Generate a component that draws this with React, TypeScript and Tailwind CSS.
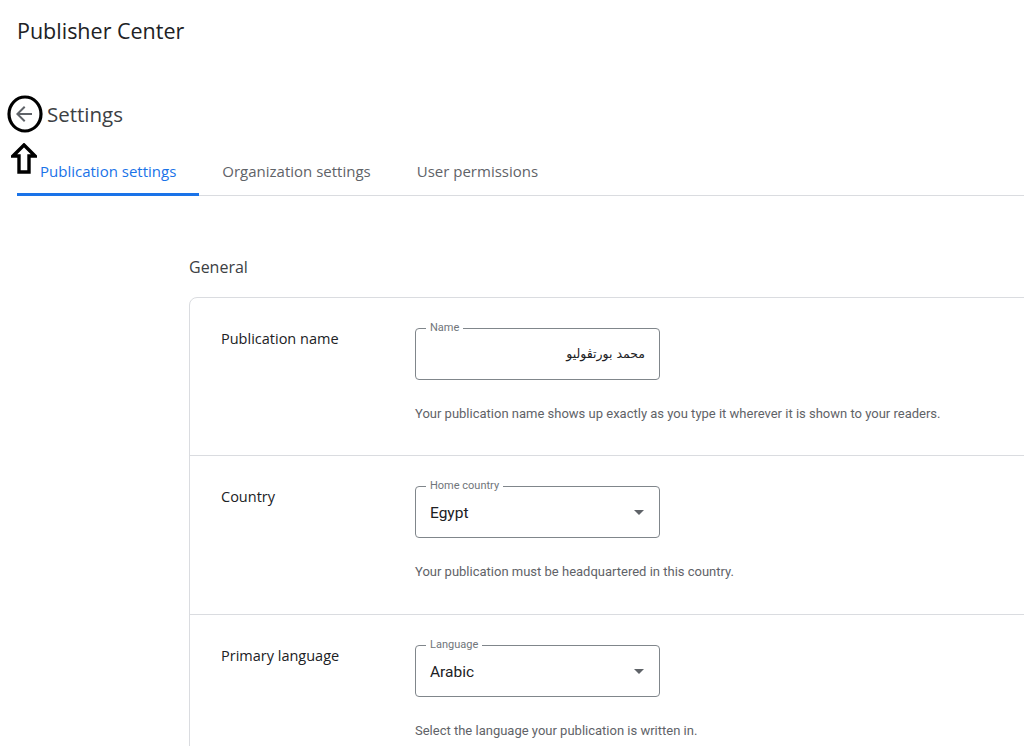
import React from "react";

function OutlinedField({ label, value, select, rtl }: { label: string; value: string; select?: boolean; rtl?: boolean }) {
  return (
    <div className="relative h-[52px] w-[245px] rounded-[4px] border border-[#80868b] flex items-center px-[14px]">
      <span className="absolute -top-[8px] left-[10px] bg-white px-[4px] text-[11px] leading-[14px] text-[#70757a]">{label}</span>
      {rtl ? (
        <span dir="rtl" className="w-full text-right text-[12.5px] text-[#202124] font-['DejaVu_Sans','Noto_Sans',sans-serif]">{value}</span>
      ) : (
        <span className="flex-1 pt-[3px] text-[15.5px] text-[#202124]">{value}</span>
      )}
      {select && (
        <svg width="10" height="5" viewBox="0 0 10 5" className="mr-[1px]">
          <path d="M0 0 L5 5 L10 0 Z" fill="#5f6368" />
        </svg>
      )}
    </div>
  );
}

function Row({ title, children, help, first, last }: { title: string; children: React.ReactNode; help: string; first?: boolean; last?: boolean }) {
  return (
    <div className={`flex pl-[31px] pt-[30px] ${first ? "h-[158px]" : "h-[159px]"} ${last ? "" : "border-b border-[#dadce0]"}`}>
      <div className="w-[194px] pt-[1px] text-[14.5px] font-[500] text-[#202124] leading-[20px] font-['Open_Sans',sans-serif]">{title}</div>
      <div className="flex flex-col">
        {children}
        <p className="mt-[26px] text-[13px] leading-[16px] text-[#5f6368]">{help}</p>
      </div>
    </div>
  );
}

export default function App() {
  const tabs = ["Publication settings", "Organization settings", "User permissions"];
  return (
    <div className="relative w-[1024px] h-[746px] overflow-hidden bg-white font-['Roboto',sans-serif]">
      <div className="pl-[17px] pt-[17px] text-[21.5px] leading-[28px] text-[#202124] font-['Open_Sans',sans-serif]">Publisher Center</div>

      <div className="mt-[49px] flex items-center h-[40px] pl-[12px]">
        <svg width="24" height="24" viewBox="0 0 24 24">
          <path d="M20 11H7.83l5.59-5.59L12 4l-8 8 8 8 1.41-1.41L7.83 13H20v-2z" fill="#5f6368" />
        </svg>
        <span className="ml-[11px] text-[20.5px] text-[#3c4043] font-['Open_Sans',sans-serif]">Settings</span>
      </div>

      <div className="mt-[15px] ml-[17px] flex border-b border-[#dadce0]">
        {tabs.map((t, i) => (
          <div key={t} className={`relative h-[46px] flex items-center pb-[1px] px-[23px] text-[15px] font-['Open_Sans',sans-serif] ${i === 0 ? "text-[#1a73e8]" : "text-[#5f6368]"}`}>
            {t}
            {i === 0 && <div className="absolute left-0 right-0 -bottom-[1px] h-[3px] bg-[#1a73e8]" />}
          </div>
        ))}
      </div>

      <div className="pl-[189px]">
        <div className="mt-[60px] text-[16px] leading-[22px] text-[#3c4043] font-['Open_Sans',sans-serif]">General</div>
        <div className="mt-[19px] w-[900px] rounded-[8px] border border-[#dadce0]">
          <Row title="Publication name" help="Your publication name shows up exactly as you type it wherever it is shown to your readers." first>
            <OutlinedField label="Name" value="محمد بورتڤوليو" rtl />
          </Row>
          <Row title="Country" help="Your publication must be headquartered in this country.">
            <OutlinedField label="Home country" value="Egypt" select />
          </Row>
          <Row title="Primary language" help="Select the language your publication is written in." last>
            <OutlinedField label="Language" value="Arabic" select />
          </Row>
        </div>
      </div>

      {/* annotation: circle around back button */}
      <svg className="absolute left-[6px] top-[94px]" width="40" height="40" viewBox="0 0 40 40">
        <ellipse cx="19" cy="20" rx="16" ry="17" fill="none" stroke="#000" strokeWidth="3.2" />
      </svg>
      {/* annotation: up arrow */}
      <svg className="absolute left-[11px] top-[143px]" width="26" height="31" viewBox="0 0 26 31">
        <path d="M13 2 L24 13 L18 13 L18 29 L8 29 L8 13 L2 13 Z" fill="#fff" stroke="#000" strokeWidth="3.4" strokeLinejoin="miter" />
      </svg>
    </div>
  );
}
